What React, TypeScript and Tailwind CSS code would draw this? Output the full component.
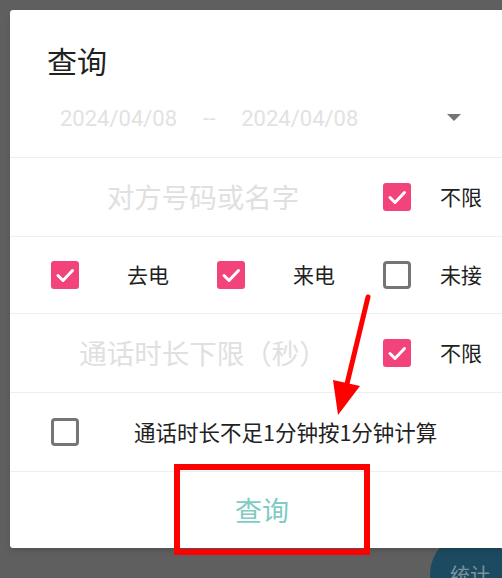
import React from "react";

const cjk = { fontFamily: '"Noto Sans CJK SC", "Noto Sans", sans-serif' };

function Box({ checked }: { checked: boolean }) {
  if (checked) {
    return (
      <div className="w-[28px] h-[28px] shrink-0 rounded-[3px] bg-[#f2437b] flex items-center justify-center">
        <svg width="28" height="28" viewBox="0 0 28 28">
          <polyline points="7,14.5 12,19.5 21.5,9.5" fill="none" stroke="#ffffff" strokeWidth="3" strokeLinecap="round" strokeLinejoin="round" />
        </svg>
      </div>
    );
  }
  return <div className="w-[28px] h-[28px] shrink-0 rounded-[4px] border-[3px] border-[#757575] bg-white" />;
}

export default function App() {
  return (
    <div className="relative w-[502px] h-[578px] overflow-hidden bg-[#5f5f5f]" style={cjk}>
      {/* floating button behind the dialog */}
      <div className="absolute left-[430px] top-[534px] w-[80px] h-[80px] rounded-full bg-[#1c4a61] flex items-start justify-center">
        <span className="mt-[26px] text-[20px] text-[#7d919d] whitespace-nowrap">统计</span>
      </div>

      <div className="relative ml-[10px] mt-[10px] w-[504px] bg-white rounded-[3px] shadow-md">
        <div className="flex flex-col">
          <div className="mt-[30px] h-[40px] pl-[37px] flex items-center text-[30px] text-[#212121]">查询</div>
          <div className="mt-[20px] h-[36px] flex items-center text-[22px] text-[#e2e2e2] whitespace-nowrap" style={{ fontFamily: 'Roboto, "Noto Sans", sans-serif' }}>
            <span className="ml-[50px]">2024/04/08</span>
            <span className="ml-[26px]">--</span>
            <span className="ml-[26px]">2024/04/08</span>
            <svg className="ml-[89px]" width="14" height="8" viewBox="0 0 14 8">
              <polygon points="0,0 14,0 7,7" fill="#757575" />
            </svg>
          </div>
          <div className="h-[21px]" />
        </div>

        <div className="h-[79px] border-t border-[#eeeeee] flex items-center">
          <div className="ml-[31px] w-[324px] text-center text-[27.5px] text-[#e0e0e0] whitespace-nowrap">对方号码或名字</div>
          <div className="ml-[18px]"><Box checked /></div>
          <span className="ml-[29px] text-[21px] text-[#212121] whitespace-nowrap">不限</span>
        </div>

        <div className="h-[77px] border-t border-[#eeeeee] flex items-center">
          <div className="ml-[41px]"><Box checked /></div>
          <span className="ml-[48px] w-[42px] text-[21px] text-[#212121] whitespace-nowrap">去电</span>
          <div className="ml-[48px]"><Box checked /></div>
          <span className="ml-[48px] w-[42px] text-[21px] text-[#212121] whitespace-nowrap">来电</span>
          <div className="ml-[48px]"><Box checked={false} /></div>
          <span className="ml-[29px] text-[21px] text-[#212121] whitespace-nowrap">未接</span>
        </div>

        <div className="h-[79px] border-t border-[#eeeeee] flex items-center">
          <div className="ml-[31px] w-[324px] text-center text-[27.5px] text-[#e0e0e0] whitespace-nowrap">通话时长下限（秒）</div>
          <div className="ml-[18px]"><Box checked /></div>
          <span className="ml-[29px] text-[21px] text-[#212121] whitespace-nowrap">不限</span>
        </div>

        <div className="h-[79px] border-t border-[#eeeeee] flex items-center">
          <div className="ml-[41px]"><Box checked={false} /></div>
          <span className="ml-[55px] text-[21.5px] text-[#212121] whitespace-nowrap">通话时长不足1分钟按1分钟计算</span>
        </div>

        <div className="h-[77px] border-t border-[#eeeeee] flex items-center justify-center">
          <span className="text-[27px] text-[#80cbc4]">查询</span>
        </div>
      </div>

      {/* annotation: red box */}
      <div className="absolute left-[174px] top-[464px] w-[196px] h-[91px] border-[6px] border-[#ff0000]" />

      {/* annotation: red arrow */}
      <svg className="absolute left-0 top-0" width="502" height="578" viewBox="0 0 502 578">
        <line x1="368" y1="297" x2="346" y2="388" stroke="#ff0000" strokeWidth="5" strokeLinecap="round" />
        <polygon points="333,380 360,386 338,415" fill="#ff0000" />
      </svg>
    </div>
  );
}
